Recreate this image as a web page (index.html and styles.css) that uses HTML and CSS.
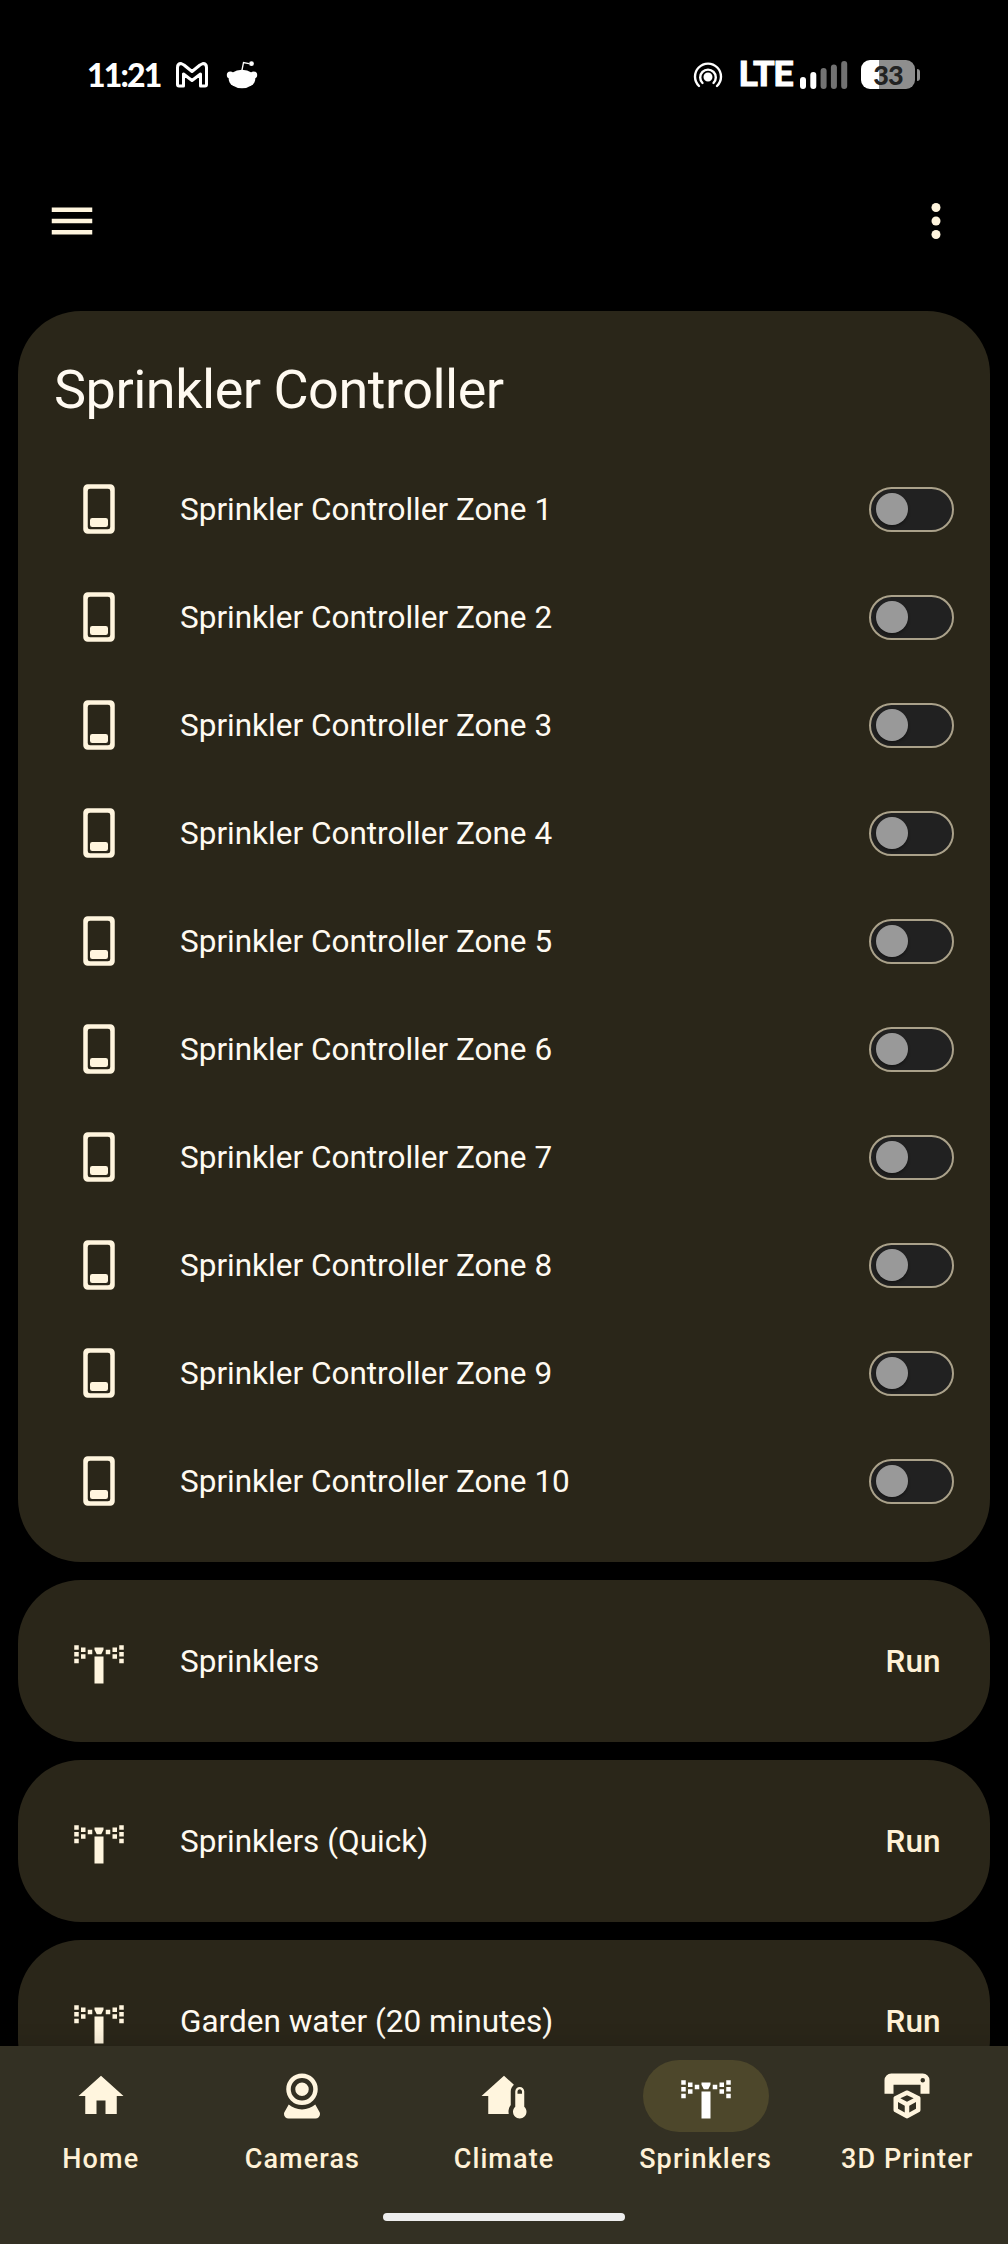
FILE: index.html
```html
<!DOCTYPE html>
<html lang="en">
<head>
<meta charset="utf-8">
<title>Sprinklers</title>
<link rel="stylesheet" href="styles.css">
</head>
<body>
<svg class="defs" width="0" height="0">
  <symbol id="switch" viewBox="0 0 24 24"><path fill-rule="evenodd" d="M7 1H17A2 2 0 0 1 19 3V21A2 2 0 0 1 17 23H7A2 2 0 0 1 5 21V3A2 2 0 0 1 7 1M8 3A1 1 0 0 0 7 4V20A1 1 0 0 0 8 21H16A1 1 0 0 0 17 20V4A1 1 0 0 0 16 3ZM9 16H15A1 1 0 0 1 16 17V19A1 1 0 0 1 15 20H9A1 1 0 0 1 8 19V17A1 1 0 0 1 9 16Z"/></symbol>
  <symbol id="sprinkler" viewBox="0 0 24 24"><path d="M1 5H3V7H1ZM1 8H3V10H1ZM1 11H3V13H1ZM4 6H6V8H4ZM4 9H6V11H4ZM7 7H9V9H7ZM15 7H17V9H15ZM18 6H20V8H18ZM18 9H20V11H18ZM21 5H23V7H21ZM21 8H23V10H21ZM21 11H23V13H21ZM10 6H14V7L13 9H11L10 7ZM10 10H14V22H10Z"/></symbol>
</svg>
<div class="screen">
  <header class="status">
    <span class="clock">11:21</span>
    <svg class="gmail" width="32" height="26" viewBox="0 0 32 26"><path d="M1.5 22.5V5.5Q1.5 1.5 5 1.5L8 3L16 9.5L24 3L27 1.5Q30.500 1.500 30.500 5.500V22.500Q30.500 24 29 24H24.500V12L16 18.500L7.500 12V24H3Q1.500 24 1.500 22.500Z"/></svg>
    <svg class="reddit" width="32" height="28" viewBox="0 0 32 28"><ellipse cx="16" cy="18" rx="13.300" ry="9.300"/><circle cx="4.300" cy="14" r="3.500"/><circle cx="27.700" cy="14" r="3.500"/><path d="M15.800 10L17.500 1.500L23 2.600" fill="none" stroke="#fff" stroke-width="1.300"/><circle cx="25.500" cy="2.700" r="2.400"/></svg>
    <span class="grow"></span>
    <svg class="hotspot" width="30" height="26" viewBox="0 0 30 26"><circle cx="15" cy="15" r="3.300" fill="#fff"/><path d="M9.500 21A7.800 7.800 0 1 1 20.500 21M6 24A13 13 0 1 1 24 24"/></svg>
    <span class="lte">LTE</span>
    <svg class="signal" width="48" height="28" viewBox="0 0 48 28"><rect y="16" width="6" height="12" rx="3"/><rect x="10.300" y="11" width="6" height="17" rx="3"/><g class="dim"><rect x="20.600" y="7" width="6" height="21" rx="3"/><rect x="30.900" y="3.500" width="6" height="24.500" rx="3"/><rect x="41.200" width="6" height="28" rx="3"/></g></svg>
    <span class="battery">33</span><span class="nub"></span>
  </header>
  <div class="toolbar">
    <svg class="icon" viewBox="0 0 24 24"><path d="M3 6H21V8H3ZM3 11H21V13H3ZM3 16H21V18H3Z"/></svg>
    <svg class="icon" viewBox="0 0 24 24"><circle cx="12" cy="6" r="2"/><circle cx="12" cy="12" r="2"/><circle cx="12" cy="18" r="2"/></svg>
  </div>
  <main>
    <section class="card zones">
      <h1>Sprinkler Controller</h1>
      <div class="row"><svg class="icon"><use href="#switch"/></svg><span class="name">Sprinkler Controller Zone 1</span><i class="toggle"></i></div>
      <div class="row"><svg class="icon"><use href="#switch"/></svg><span class="name">Sprinkler Controller Zone 2</span><i class="toggle"></i></div>
      <div class="row"><svg class="icon"><use href="#switch"/></svg><span class="name">Sprinkler Controller Zone 3</span><i class="toggle"></i></div>
      <div class="row"><svg class="icon"><use href="#switch"/></svg><span class="name">Sprinkler Controller Zone 4</span><i class="toggle"></i></div>
      <div class="row"><svg class="icon"><use href="#switch"/></svg><span class="name">Sprinkler Controller Zone 5</span><i class="toggle"></i></div>
      <div class="row"><svg class="icon"><use href="#switch"/></svg><span class="name">Sprinkler Controller Zone 6</span><i class="toggle"></i></div>
      <div class="row"><svg class="icon"><use href="#switch"/></svg><span class="name">Sprinkler Controller Zone 7</span><i class="toggle"></i></div>
      <div class="row"><svg class="icon"><use href="#switch"/></svg><span class="name">Sprinkler Controller Zone 8</span><i class="toggle"></i></div>
      <div class="row"><svg class="icon"><use href="#switch"/></svg><span class="name">Sprinkler Controller Zone 9</span><i class="toggle"></i></div>
      <div class="row"><svg class="icon"><use href="#switch"/></svg><span class="name">Sprinkler Controller Zone 10</span><i class="toggle"></i></div>
    </section>
    <section class="card"><div class="row"><svg class="icon"><use href="#sprinkler"/></svg><span class="name">Sprinklers</span><span class="run">Run</span></div></section>
    <section class="card"><div class="row"><svg class="icon"><use href="#sprinkler"/></svg><span class="name">Sprinklers (Quick)</span><span class="run">Run</span></div></section>
    <section class="card"><div class="row"><svg class="icon"><use href="#sprinkler"/></svg><span class="name">Garden water (20 minutes)</span><span class="run">Run</span></div></section>
  </main>
  <nav>
    <div class="tabs">
      <div class="tab"><span class="pill"><svg class="icon" viewBox="0 0 24 24"><path d="M10 20V14H14V20H19V12H22L12 3L2 12H5V20H10Z"/></svg></span>Home</div>
      <div class="tab"><span class="pill"><svg class="icon" viewBox="0 0 24 24"><path d="M12,2A7,7 0 0,1 19,9A7,7 0 0,1 12,16A7,7 0 0,1 5,9A7,7 0 0,1 12,2M12,4A5,5 0 0,0 7,9A5,5 0 0,0 12,14A5,5 0 0,0 17,9A5,5 0 0,0 12,4M12,6A3,3 0 0,1 15,9A3,3 0 0,1 12,12A3,3 0 0,1 9,9A3,3 0 0,1 12,6M6,22A2,2 0 0,1 4,20C4,19.62 4.1,19.27 4.29,18.97L6.11,15.81C7.69,17.17 9.75,18 12,18C14.25,18 16.31,17.17 17.89,15.81L19.71,18.97C19.9,19.27 20,19.62 20,20A2,2 0 0,1 18,22H6Z"/></svg></span>Cameras</div>
      <div class="tab"><span class="pill"><svg class="icon" viewBox="0 0 24 24"><path d="M19 8C20.11 8 21 8.9 21 10V16.76C21.61 17.31 22 18.11 22 19C22 20.66 20.66 22 19 22C17.34 22 16 20.66 16 19C16 18.11 16.39 17.31 17 16.76V10C17 8.9 17.9 8 19 8M19 9C18.45 9 18 9.45 18 10V11H20V10C20 9.45 19.55 9 19 9M12 3L16.4 6.96C15.54 7.69 15 8.78 15 10V16C14.37 16.83 14 17.87 14 19L14.1 20H5V12H2L12 3Z"/></svg></span>Climate</div>
      <div class="tab active"><span class="pill"><svg class="icon"><use href="#sprinkler"/></svg></span>Sprinklers</div>
      <div class="tab"><span class="pill"><svg class="icon" viewBox="0 0 24 24"><path d="M19,6A1,1 0 0,0 20,5A1,1 0 0,0 19,4A1,1 0 0,0 18,5A1,1 0 0,0 19,6M19,2A3,3 0 0,1 22,5V11H18V7H6V11H2V5A3,3 0 0,1 5,2H19M18,18.25C18,18.63 17.79,18.96 17.47,19.13L12.57,21.82C12.4,21.94 12.21,22 12,22C11.79,22 11.59,21.94 11.43,21.82L6.53,19.13C6.21,18.96 6,18.63 6,18.25V13C6,12.62 6.21,12.29 6.53,12.12L11.43,9.68C11.59,9.56 11.79,9.5 12,9.5C12.21,9.5 12.4,9.56 12.57,9.68L17.47,12.12C17.79,12.29 18,12.62 18,13V18.25M12,11.65L9.04,13L12,14.6L14.96,13L12,11.65M8,17.66L11,19.29V16.33L8,14.71V17.66M16,17.66V14.71L13,16.33V19.29L16,17.66Z"/></svg></span>3D Printer</div>
    </div>
    <div class="handle"></div>
  </nav>
</div>
</body>
</html>
```
FILE: styles.css
```css
* { box-sizing: border-box; }
body { margin: 0; background: #000; font-family: Roboto, sans-serif; }
.defs { display: block; }
.screen { width: 1008px; height: 2244px; display: flex; flex-direction: column; overflow: hidden; }
.status { height: 149px; padding: 0 88px 0 87px; display: flex; align-items: center; color: #fff; fill: #fff; flex: none; }
.clock { font: 900 32px/36px Lato, sans-serif; letter-spacing: -1.8px; width: 89px; }
.gmail { fill: none; stroke: #fff; stroke-width: 3; stroke-linejoin: round; }
.reddit { margin-left: 18px; }
.grow { flex: 1; }
.hotspot { fill: none; stroke: #fff; stroke-width: 2.4; stroke-linecap: round; }
.lte { font: 700 35px/36px Roboto, sans-serif; letter-spacing: -1px; width: 61px; margin-left: 16px; -webkit-text-stroke: 1px #fff; }
.signal .dim { fill: #727272; }
.battery { width: 54px; height: 29px; margin-left: 13px; border-radius: 9px; background: linear-gradient(90deg, #fff 18px, #8e8e8e 18px); color: #222; font: 900 27px/29px Lato, sans-serif; text-align: center; letter-spacing: -1px; }
.nub { width: 3px; height: 12px; margin-left: 2px; border-radius: 0 3px 3px 0; background: #8e8e8e; }
.icon { width: 54px; height: 54px; fill: #fff5de; flex: none; display: block; }
.toolbar { height: 162px; padding: 0 45px 18px; display: flex; align-items: center; justify-content: space-between; flex: none; }
main { flex: 1; min-height: 0; overflow: hidden; padding: 0 18px; display: flex; flex-direction: column; gap: 18px; }
.card { background: #2a2619; border-radius: 63px; padding: 36px; flex: none; }
.zones { display: flex; flex-direction: column; gap: 18px; padding-top: 0; }
h1 { margin: 0; height: 135px; padding-top: 43px; font-size: 54px; line-height: 72px; font-weight: 400; color: #fffaf1; letter-spacing: -.5px; }
.row { height: 90px; display: flex; align-items: center; padding-left: 18px; }
.name { flex: 1; margin-left: 54px; font-size: 31.5px; line-height: 45px; color: #fffaf1; }
.toggle { width: 85px; height: 45px; border: 2px solid #aaa18a; border-radius: 23px; background: #212121; padding: 4px 5px; }
.toggle::before { content: ""; display: block; width: 31.5px; height: 32px; border-radius: 50%; background: #999; box-shadow: 0 2px 3px rgba(0,0,0,.35); }
.run { margin-right: 13.5px; font-size: 31.5px; font-weight: 500; line-height: 45px; color: #fff1d6; }
nav { height: 198px; background: #333023; box-shadow: 0 -2px 20px rgba(0,0,0,.15); position: relative; padding-top: 14px; flex: none; }
.tabs { display: grid; grid-template-columns: repeat(5, 1fr); }
.tab { display: flex; flex-direction: column; align-items: center; gap: 9px; font-size: 27px; line-height: 36px; font-weight: 500; letter-spacing: 1.1px; color: #fff1d6; }
.pill { width: 126px; height: 72px; border-radius: 36px; display: flex; align-items: center; justify-content: center; }
.active .pill { background: #4d472b; }
.active .icon { fill: #fff; }
.handle { width: 242px; height: 8px; margin: 36px auto 0; border-radius: 4px; background: #eee; }
```
